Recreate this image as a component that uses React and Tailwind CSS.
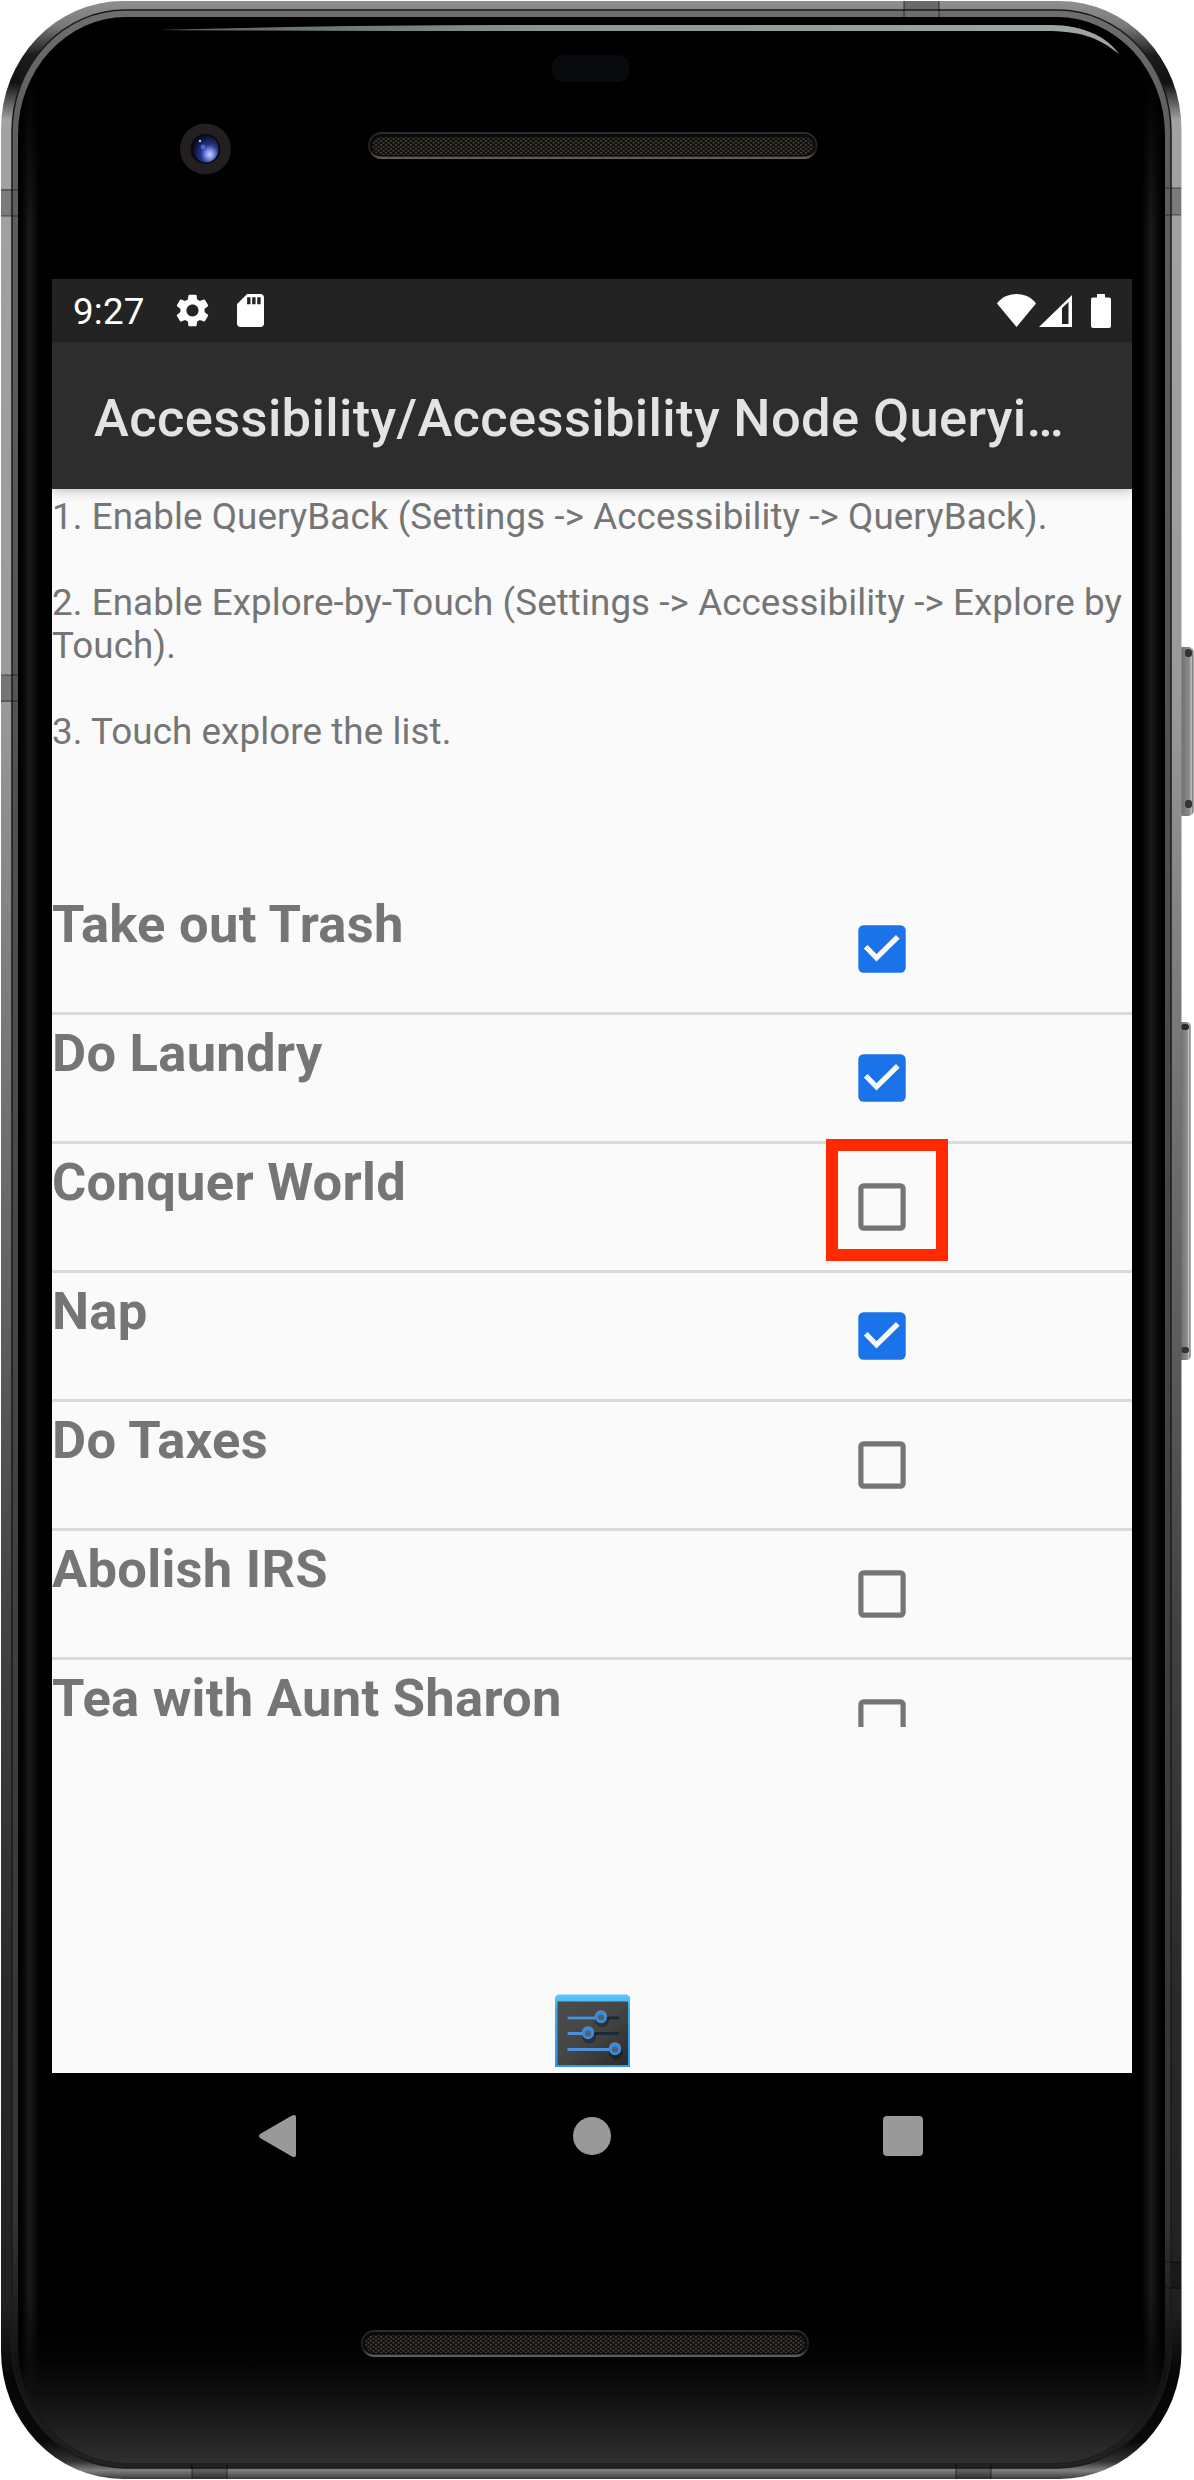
const tasks = [
  ['Take out Trash', true],
  ['Do Laundry', true],
  ['Conquer World', false, true],
  ['Nap', true],
  ['Do Taxes', false],
  ['Abolish IRS', false],
  ['Tea with Aunt Sharon', false],
];

function Speaker({ x, y, w }) {
  return (
    <g>
      <rect x={x} y={y} width={w} height="27" rx="13.5" fill="url(#rim)" />
      <rect x={x + 2} y={y + 2} width={w - 4} height="22.5" rx="11" fill="#0b0a09" />
      <rect x={x + 4} y={y + 5} width={w - 8} height="18" rx="9" fill="url(#mesh)" />
    </g>
  );
}

function PhoneBody() {
  return (
    <svg className="absolute inset-0" width="1194" height="2480" viewBox="0 0 1194 2480">
      <defs>
        <linearGradient id="rim" x1="0" y1="0" x2="0" y2="1">
          <stop offset="0" stopColor="#2c2c2e" />
          <stop offset="0.7" stopColor="#1c1c1c" />
          <stop offset="1" stopColor="#6a6461" />
        </linearGradient>
        <pattern id="mesh" width="5" height="4" patternUnits="userSpaceOnUse">
          <rect width="5" height="4" fill="#12100e" />
          <rect x="0" y="0" width="2" height="1.6" fill="#443f39" />
          <rect x="2.5" y="2" width="2" height="1.6" fill="#443f39" />
        </pattern>
        <linearGradient id="metal" x1="0" y1="0" x2="0" y2="1">
          <stop offset="0" stopColor="#8e8f8e" />
          <stop offset="0.010" stopColor="#7a7a7a" />
          <stop offset="0.022" stopColor="#1c1c1c" />
          <stop offset="0.033" stopColor="#111" />
          <stop offset="0.048" stopColor="#a2a2a2" />
          <stop offset="0.28" stopColor="#9a9a9a" />
          <stop offset="0.38" stopColor="#808080" />
          <stop offset="0.5" stopColor="#666" />
          <stop offset="0.65" stopColor="#434343" />
          <stop offset="0.8" stopColor="#2a2a2a" />
          <stop offset="0.93" stopColor="#202020" />
          <stop offset="0.96" stopColor="#050505" />
          <stop offset="0.985" stopColor="#0a0a0a" />
          <stop offset="0.993" stopColor="#333" />
          <stop offset="0.9965" stopColor="#808080" />
          <stop offset="1" stopColor="#3a3a3a" />
        </linearGradient>
        <linearGradient id="inner" x1="0" y1="0" x2="0" y2="1">
          <stop offset="0" stopColor="#6e6e6e" />
          <stop offset="0.04" stopColor="#606060" />
          <stop offset="0.5" stopColor="#474747" />
          <stop offset="0.9" stopColor="#333" />
          <stop offset="0.96" stopColor="#111" />
          <stop offset="1" stopColor="#222" />
        </linearGradient>
        <linearGradient id="glow" x1="0" y1="0" x2="0" y2="1">
          <stop offset="0" stopColor="#000" />
          <stop offset="0.3" stopColor="#040404" />
          <stop offset="0.6" stopColor="#141414" />
          <stop offset="1" stopColor="#303030" />
        </linearGradient>
        <linearGradient id="side" x1="0" y1="0" x2="1" y2="0">
          <stop offset="0" stopColor="#1a1a1a" stopOpacity="0" />
          <stop offset="0.45" stopColor="#1a1a1a" />
          <stop offset="1" stopColor="#1a1a1a" stopOpacity="0" />
        </linearGradient>
        <linearGradient id="fade" x1="0" y1="0" x2="0" y2="1">
          <stop offset="0" stopColor="#000" />
          <stop offset="0.07" stopColor="#fff" />
          <stop offset="0.95" stopColor="#fff" />
          <stop offset="1" stopColor="#000" />
        </linearGradient>
        <mask id="sideMask" maskUnits="userSpaceOnUse" x="0" y="70" width="1194" height="2340">
          <rect x="0" y="70" width="1194" height="2340" fill="url(#fade)" />
        </mask>
        <linearGradient id="shine" x1="0" y1="0" x2="1" y2="0">
          <stop offset="0" stopColor="#59615f" />
          <stop offset="0.4" stopColor="#8b9393" />
          <stop offset="1" stopColor="#a0a6a6" />
        </linearGradient>
        <linearGradient id="key" x1="0" y1="0" x2="1" y2="0">
          <stop offset="0" stopColor="#666" />
          <stop offset="0.35" stopColor="#777" />
          <stop offset="0.75" stopColor="#8d8d8d" />
          <stop offset="0.85" stopColor="#c4c4c4" />
          <stop offset="1" stopColor="#555" />
        </linearGradient>
        <radialGradient id="lens" cx="0.65" cy="0.7" r="0.7">
          <stop offset="0" stopColor="#c9d4ff" />
          <stop offset="0.22" stopColor="#8095e8" />
          <stop offset="0.5" stopColor="#25378c" />
          <stop offset="1" stopColor="#080d2c" />
        </radialGradient>
        <clipPath id="glass">
          <rect x="18" y="17" width="1147" height="2446" rx="108" ry="118" />
        </clipPath>
      </defs>
      <rect x="1178" y="647" width="15.5" height="169" rx="5" fill="url(#key)" />
      <rect x="1185" y="649" width="7" height="8" rx="3" fill="#333" />
      <rect x="1185" y="800" width="7" height="8" rx="3" fill="#333" />
      <rect x="1178" y="1022" width="12.5" height="338" rx="4" fill="url(#key)" />
      <rect x="1181" y="1024" width="8" height="6" rx="3" fill="#2a2a2a" />
      <rect x="1181" y="1347" width="8" height="6" rx="3" fill="#333" />

      <rect x="1" y="1" width="1180.5" height="2478" rx="122" ry="128" fill="url(#metal)" />
      <g fill="#000" opacity="0.24">
        <rect x="1" y="189" width="17" height="27" />
        <rect x="1" y="675" width="17" height="27" />
        <rect x="904" y="1" width="35" height="16" />
        <rect x="1164" y="188" width="17" height="27" />
        <rect x="1164" y="2262" width="17" height="27" />
        <rect x="192" y="2463" width="35" height="16" />
        <rect x="956" y="2463" width="35" height="16" />
      </g>
      <rect x="12" y="10" width="1159" height="2458" rx="113" ry="122" fill="url(#inner)" stroke="#1a1a1a" strokeWidth="1.5" />
      <path
        stroke="#000"
        strokeOpacity="0.5"
        strokeWidth="1.2"
        d="M1 190H18M1 216H18M1 675H18M1 701H18M904 1V17M939 1V17M1164 188H1181M1164 215H1181M1164 2262H1181M1164 2288H1181M192 2463V2479M227 2463V2479M956 2463V2479M991 2463V2479"
      />
      <rect x="18" y="17" width="1147" height="2446" rx="108" ry="118" fill="#000" />
      <g clipPath="url(#glass)">
        <rect x="18" y="2320" width="1147" height="143" fill="url(#glow)" />
        <g mask="url(#sideMask)">
          <rect x="21" y="70" width="19" height="2340" fill="url(#side)" />
          <rect x="1142" y="70" width="20" height="2340" fill="url(#side)" />
        </g>
      </g>
      <path d="M158 30Q350 25 500 25H1050C1085 25 1108 38 1119 54C1098 37 1080 31 1045 31H500Q300 31 158 30Z" fill="url(#shine)" />
      <rect x="552" y="55" width="77.5" height="27" rx="12" fill="#090a0e" />
      <circle cx="205.5" cy="149" r="25.5" fill="#231f20" />
      <circle cx="205.5" cy="149" r="15" fill="#0c0a0c" />
      <ellipse cx="206" cy="149" rx="12.5" ry="13.5" fill="url(#lens)" />
      <circle cx="200" cy="141" r="1.2" fill="#b8c4ff" />
      <circle cx="203" cy="147" r="2.4" fill="#5874d8" opacity="0.8" />
      <Speaker x={368} y={132} w={449.5} />
      <Speaker x={361} y={2330} w={448} />
    </svg>
  );
}

function StatusBar() {
  return (
    <header className="flex h-[63px] items-center bg-[#232323] pl-[21px] pr-[21px] text-white">
      <span className="w-[103px] text-[36.75px] leading-[60px] pt-[3px] tracking-[0.2px]">9:27</span>
      <svg className="h-[33px] w-[33px]" viewBox="2.2 2 19.6 20" preserveAspectRatio="none" fill="#fff">
        <path d="M19.14 12.94c.04-.3.06-.61.06-.94 0-.32-.02-.64-.07-.94l2.03-1.58a.49.49 0 0 0 .12-.61l-1.92-3.32a.488.488 0 0 0-.59-.22l-2.39.96c-.5-.38-1.03-.7-1.62-.94l-.36-2.54a.484.484 0 0 0-.48-.41h-3.84c-.24 0-.43.17-.47.41l-.36 2.54c-.59.24-1.13.57-1.62.94l-2.39-.96c-.22-.08-.47 0-.59.22L2.74 8.87c-.12.21-.08.47.12.61l2.03 1.58c-.05.3-.09.63-.09.94s.02.64.07.94l-2.03 1.58a.49.49 0 0 0-.12.61l1.92 3.32c.12.22.37.29.59.22l2.39-.96c.5.38 1.03.7 1.62.94l.36 2.54c.05.24.24.41.48.41h3.84c.24 0 .44-.17.47-.41l.36-2.54c.59-.24 1.13-.56 1.62-.94l2.39.96c.22.08.47 0 .59-.22l1.92-3.32c.12-.22.07-.47-.12-.61l-2.01-1.58zM12 15.6c-1.98 0-3.6-1.62-3.6-3.6s1.62-3.6 3.6-3.6 3.6 1.62 3.6 3.6-1.62 3.6-3.6 3.6z" />
      </svg>
      <svg className="ml-[28px] h-[33px] w-[27px]" viewBox="4 2 16 20" preserveAspectRatio="none" fill="#fff">
        <path fillRule="evenodd" d="M18 2h-8L4.02 8 4 20c0 1.100.9 2 2 2h12c1.100 0 2-.9 2-2V4c0-1.100-.9-2-2-2zm-6 6.200h-2V4h2zm3 0h-2V4h2zm3 0h-2V4h2z" />
      </svg>
      <div className="ml-auto flex">
        <svg className="h-[34px] w-[39px]" viewBox="0 0 39 34" fill="#fff">
          <path d="M0 9.500C4.500 3.500 11 0 19.500 0S34.500 3.500 39 9.500L19.500 33Z" />
        </svg>
        <svg className="ml-[3px] h-[34px] w-[33px]" viewBox="0 0 33 34" fill="#fff">
          <path fillRule="evenodd" d="M0 33L33 1V33ZM23 14V30H29.500V8Z" />
        </svg>
        <svg className="ml-[19px] h-[34px] w-[20px]" viewBox="0 0 20 34" fill="#fff">
          <path d="M6 0h8v3.500h4a2 2 0 0 1 2 2V32a2 2 0 0 1-2 2H2a2 2 0 0 1-2-2V5.500a2 2 0 0 1 2-2h4Z" />
        </svg>
      </div>
    </header>
  );
}

function Checkbox({ checked }) {
  return (
    <svg className="block" width="48" height="48" viewBox="0 0 48 48" fill="none">
      {checked ? (
        <>
          <rect x="0.3" y="0.3" width="47.400" height="47.400" rx="5.200" fill="#1a73e8" />
          <path d="M7.700 21.700L18.500 32.800L39.800 11.800" stroke="#fafafa" strokeWidth="5.200" />
        </>
      ) : (
        <rect x="2.900" y="2.900" width="42.200" height="42.200" rx="2.600" stroke="#757575" strokeWidth="5.200" />
      )}
    </svg>
  );
}

function SettingsIcon() {
  return (
    <svg width="75" height="73" viewBox="0 0 75 73">
      <defs>
        <linearGradient id="panel" x1="0" y1="0" x2="1" y2="1">
          <stop offset="0" stopColor="#4c4c4a" />
          <stop offset="0.5" stopColor="#454543" />
          <stop offset="1" stopColor="#2b2b2b" />
        </linearGradient>
        <linearGradient id="cap" x1="0" y1="0" x2="0" y2="1">
          <stop offset="0" stopColor="#5cc8fa" />
          <stop offset="0.2" stopColor="#3fa9ee" />
          <stop offset="1" stopColor="#2f95f0" />
        </linearGradient>
      </defs>
      <path d="M3 0.500H72L75 3V73H0V3Z" fill="url(#cap)" />
      <rect x="2.500" y="7.500" width="70.500" height="63.500" fill="url(#panel)" />
      <g strokeWidth="3">
        <path d="M12.500 24H64M12.500 39.500H64" stroke="#1c2a38" />
        <path d="M12.500 24H40M12.500 39.500H28M12.500 55.500H54" stroke="#4a93d8" />
      </g>
      {[[46, 23.500], [33, 39.500], [60, 55.500]].map(([x, y]) => (
        <g key={x}>
          <circle cx={x + 1} cy={y + 3} r="7" fill="#000" opacity="0.3" />
          <circle cx={x} cy={y - 1} r="6.200" fill="#6d84ae" />
          <circle cx={x} cy={y} r="4.400" fill="#55606e" stroke="#2f8fe6" strokeWidth="2.600" />
        </g>
      ))}
    </svg>
  );
}

export default function App() {
  return (
    <div className="relative h-[2480px] w-[1194px] overflow-hidden bg-white font-[Roboto,sans-serif]">
      <PhoneBody />
      <div className="relative ml-[52px] flex w-[1080px] flex-col pt-[279px]">
        <StatusBar />
        <h1 className="relative z-10 h-[147px] whitespace-nowrap bg-[#2d2d2d] pl-[42px] text-[52.5px] font-medium leading-[153px] tracking-[0.35px] text-[#e3e3e3] shadow-[0_2px_10px_rgba(0,0,0,0.25)]">
          Accessibility/Accessibility Node Queryi…
        </h1>
        <main className="flex h-[1584px] flex-col bg-[#fafafa] text-[#757575]">
          <div className="h-[397px] whitespace-pre-line pt-[6px] text-[36.75px] leading-[43px] tracking-[0.09px]">
            {'1. Enable QueryBack (Settings -> Accessibility -> QueryBack).\n\n2. Enable Explore-by-Touch (Settings -> Accessibility -> Explore by Touch).\n\n3. Touch explore the list.'}
          </div>
          <ul className="h-[841px] overflow-hidden">
            {tasks.map(([name, done, marked]) => (
              <li key={name} className="flex h-[129px] border-b-[3px] border-[#dadada]">
                <span className="w-[806px] pt-[10px] text-[52.5px] font-bold leading-[56px] tracking-[0.27px]">{name}</span>
                <span className="relative pt-[39px]">
                  <Checkbox checked={done} />
                  {marked && (
                    <span className="absolute -left-[32px] -top-[5px] z-10 size-[122px] border-[12.5px] border-[#ff2a00]" />
                  )}
                </span>
              </li>
            ))}
          </ul>
          <div className="mt-auto flex justify-center pb-[6px]">
            <SettingsIcon />
          </div>
        </main>
        <nav className="flex h-[126px] items-center text-[#999]">
          <svg className="ml-[207px] h-[42px] w-[37px]" viewBox="0 0 37 42" fill="currentColor">
            <path d="M1 19L33 .6Q37-1 37 2V40Q37 43 33 41.400L1 23Q-1 21 1 19Z" />
          </svg>
          <span className="ml-[277px] size-[38px] rounded-full bg-[#999]" />
          <span className="ml-[272px] size-[40px] rounded-[4px] bg-[#999]" />
        </nav>
      </div>
    </div>
  );
}
